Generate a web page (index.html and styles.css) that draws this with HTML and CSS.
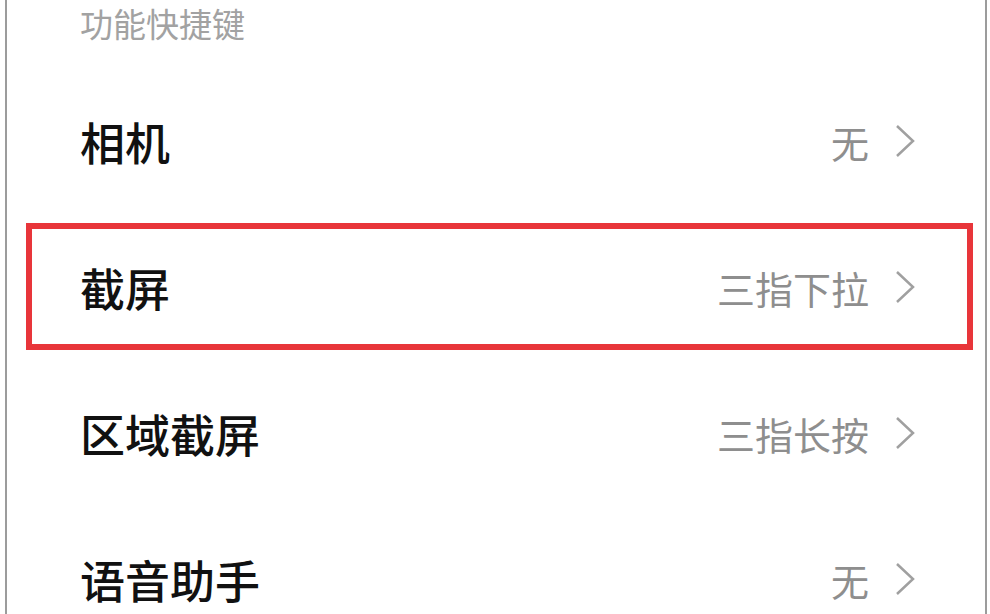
FILE: index.html
```html
<!DOCTYPE html>
<html>
<head>
    <meta charset="utf-8">
    <title>功能快捷键</title>
    <link rel="stylesheet" href="styles.css">
</head>
<body>
    <div class="panel">
        <div class="section-title">功能快捷键</div>

        <div class="row">
            <span class="row-name">相机</span>
            <span class="row-value">无</span>
            <svg class="chevron" viewBox="0 0 20 34"><polyline points="2,2 18,17 2,32"/></svg>
        </div>

        <div class="row marked">
            <span class="row-name">截屏</span>
            <span class="row-value">三指下拉</span>
            <svg class="chevron" viewBox="0 0 20 34"><polyline points="2,2 18,17 2,32"/></svg>
        </div>

        <div class="row">
            <span class="row-name">区域截屏</span>
            <span class="row-value">三指长按</span>
            <svg class="chevron" viewBox="0 0 20 34"><polyline points="2,2 18,17 2,32"/></svg>
        </div>

        <div class="row">
            <span class="row-name">语音助手</span>
            <span class="row-value">无</span>
            <svg class="chevron" viewBox="0 0 20 34"><polyline points="2,2 18,17 2,32"/></svg>
        </div>
    </div>
</body>
</html>
```

FILE: styles.css
```css
body {
    margin: 0;
    background: #fff;
    font-family: "Noto Sans CJK SC", "Noto Sans", sans-serif;
    overflow: hidden;
}
.panel {
    margin-left: 5px;
    width: 978px;
    height: 614px;
    overflow: hidden;
    border-left: 2px solid #9c9c9c;
    border-right: 2px solid #9c9c9c;
    background: #fff;
}
.section-title {
    height: 46px;
    line-height: 46px;
    padding-bottom: 22px;
    padding-left: 73px;
    font-size: 33px;
    color: #a2a2a2;
}
.row {
    position: relative;
    height: 146px;
    display: flex;
    align-items: center;
    padding: 0 70px 0 73px;
}
.row-name {
    flex: 1;
    font-size: 45px;
    font-weight: 500;
    color: #111;
}
.row-value {
    font-size: 38px;
    color: #8e8e8e;
    margin-right: 26px;
}
.chevron {
    width: 20px;
    height: 34px;
    fill: none;
    stroke: #a0a0a0;
    stroke-width: 2.5;
}
.marked::after {
    content: "";
    position: absolute;
    top: 9px;
    left: 19px;
    right: 12px;
    bottom: 10px;
    border: 6px solid #e8353a;
}
```
